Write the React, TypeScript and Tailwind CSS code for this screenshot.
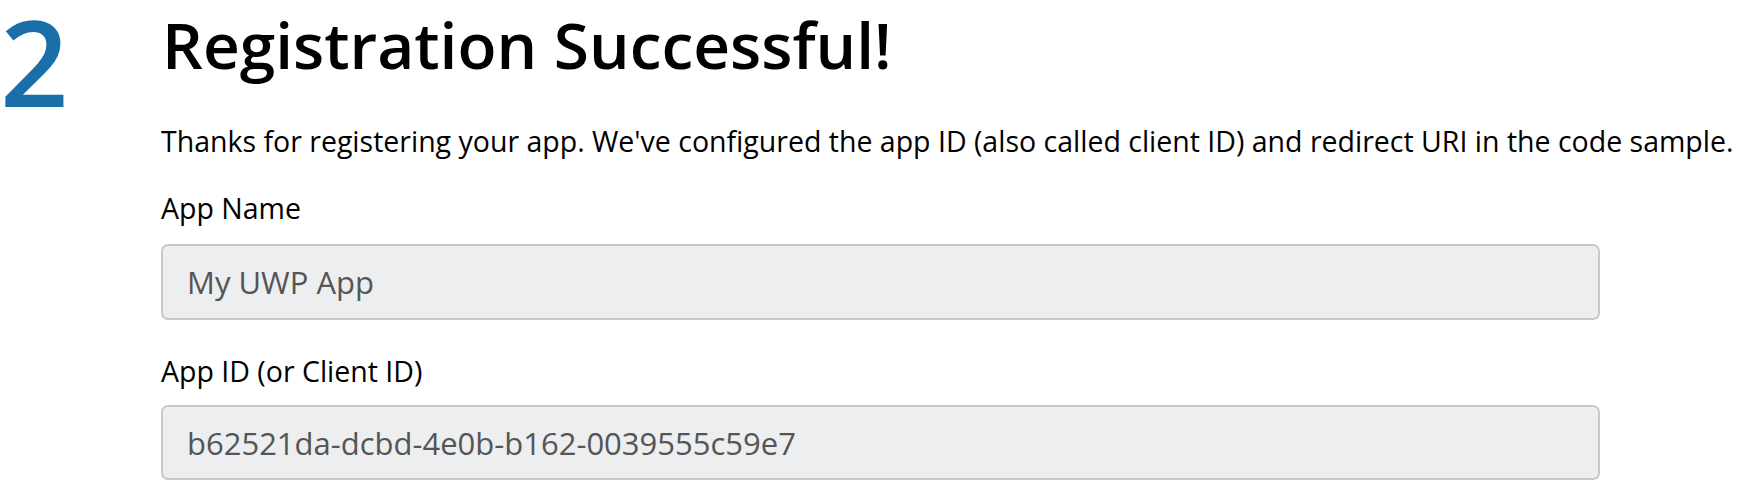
import React from "react";

export default function App() {
  const font = { fontFamily: '"Open Sans", "Noto Sans", sans-serif' };
  return (
    <div className="w-[1746px] h-[494px] bg-white overflow-hidden flex" style={font}>
      <div className="w-[161px] shrink-0">
        <div className="text-[120px] leading-[122px] font-semibold text-[#1b6fa8]">2</div>
      </div>
      <div className="flex flex-col w-[1439px]">
        <h1 className="text-[64px] leading-[90px] font-semibold text-black ml-[1px]">Registration Successful!</h1>
        <p className="text-[28.5px] leading-[42px] text-black mt-[30px] whitespace-nowrap">
          Thanks for registering your app. We've configured the app ID (also called client ID) and redirect URI in the code sample.
        </p>
        <label className="text-[28.5px] leading-[42px] text-black mt-[25px]">App Name</label>
        <div className="mt-[15px] h-[76px] rounded-[7px] border-2 border-[#c9c9c9] bg-[#edeef0] flex items-center pl-[24px] text-[31px] leading-[44px] text-[#555555]">
          My UWP App
        </div>
        <label className="text-[28.5px] leading-[42px] text-black mt-[30px]">App ID (or Client ID)</label>
        <div className="mt-[13px] h-[75px] rounded-[7px] border-2 border-[#c9c9c9] bg-[#edeef0] flex items-center pl-[24px] text-[31px] leading-[44px] text-[#555555]">
          b62521da-dcbd-4e0b-b162-0039555c59e7
        </div>
      </div>
    </div>
  );
}
